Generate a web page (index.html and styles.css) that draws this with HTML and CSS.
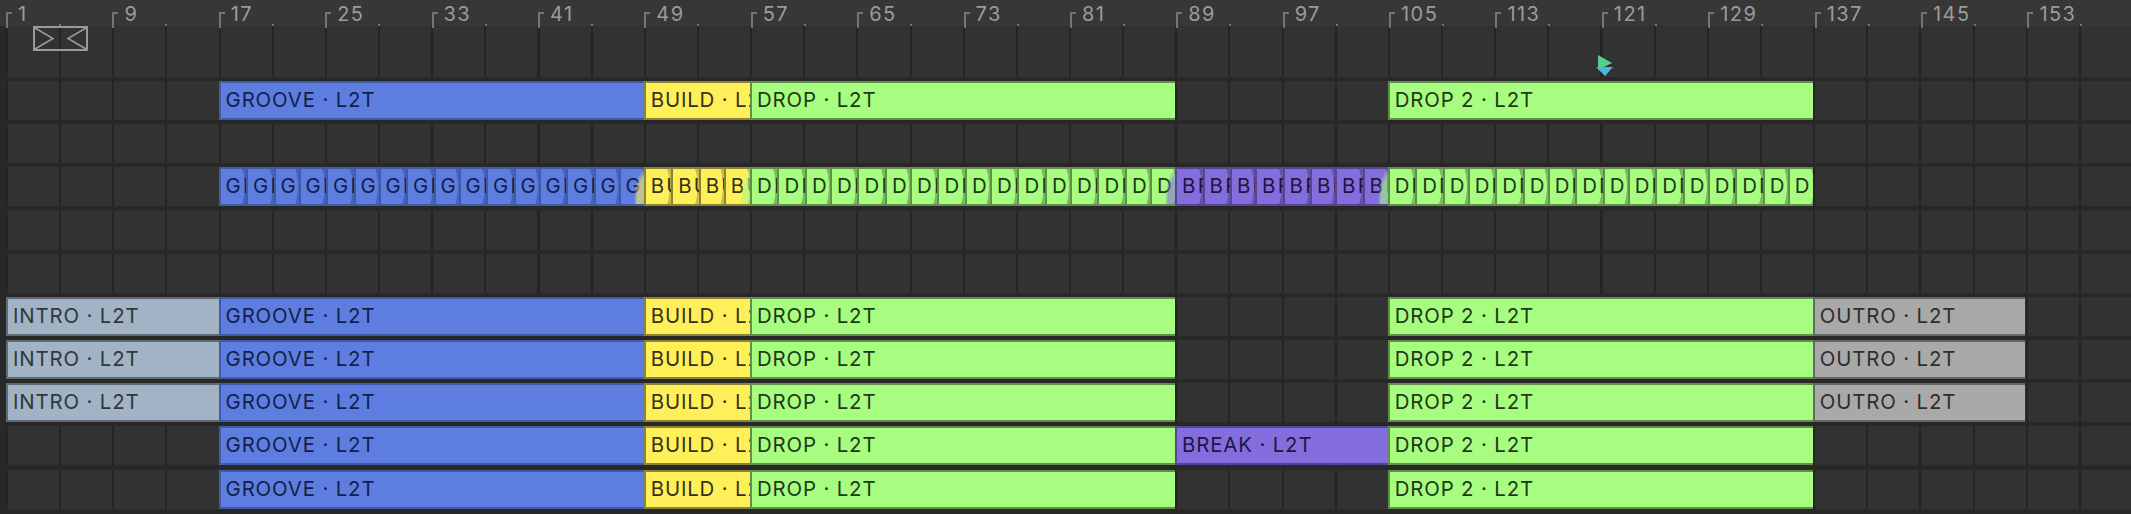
FILE: index.html
```html
<!DOCTYPE html>
<html lang="en">
<head>
  <meta charset="UTF-8">
  <title>Arrangement</title>
  <link rel="stylesheet" href="styles.css">
</head>
<body>

  <div class="ruler">
    <span class="mark">1</span><span class="mark">9</span><span class="mark">17</span><span class="mark">25</span>
    <span class="mark">33</span><span class="mark">41</span><span class="mark">49</span><span class="mark">57</span>
    <span class="mark">65</span><span class="mark">73</span><span class="mark">81</span><span class="mark">89</span>
    <span class="mark">97</span><span class="mark">105</span><span class="mark">113</span><span class="mark">121</span>
    <span class="mark">129</span><span class="mark">137</span><span class="mark">145</span><span class="mark">153</span>
  </div>

  <div class="tracks">

    <div class="track track-top">
      <svg class="locator" width="55" height="25" viewBox="0 0 55 25">
        <rect x="1" y="1" width="53" height="23" fill="none" stroke="#9a9a9a" stroke-width="2"/>
        <path d="M2 2 L20 12.5 L2 23 M53 2 L35 12.5 L53 23" fill="none" stroke="#9a9a9a" stroke-width="1.6"/>
      </svg>
      <svg class="playhead" width="18" height="22" viewBox="0 0 18 22">
        <path d="M2 0 L16 8 L2 15 Z" fill="#54d08e"/>
        <path d="M0 12 H17 L9 21 Z" fill="#4bb8da"/>
      </svg>
    </div>

    <div class="track">
      <div class="clip groove at-17">GROOVE · L2T</div>
      <div class="clip build at-49">BUILD · L2T</div>
      <div class="clip drop at-57">DROP · L2T</div>
      <div class="clip drop at-105">DROP 2 · L2T</div>
    </div>

    <div class="track"></div>

    <div class="track">
      <div class="clip groove at-17 sliced to-build">
        <span>GROOVE</span><span>GROOVE</span><span>GROOVE</span><span>GROOVE</span>
        <span>GROOVE</span><span>GROOVE</span><span>GROOVE</span><span>GROOVE</span>
        <span>GROOVE</span><span>GROOVE</span><span>GROOVE</span><span>GROOVE</span>
        <span>GROOVE</span><span>GROOVE</span><span>GROOVE</span><span>GROOVE</span>
      </div>
      <div class="clip build at-49 sliced to-drop">
        <span>BUILD</span><span>BUILD</span><span>BUILD</span><span>BUILD</span>
      </div>
      <div class="clip drop at-57 sliced to-break">
        <span>DROP</span><span>DROP</span><span>DROP</span><span>DROP</span>
        <span>DROP</span><span>DROP</span><span>DROP</span><span>DROP</span>
        <span>DROP</span><span>DROP</span><span>DROP</span><span>DROP</span>
        <span>DROP</span><span>DROP</span><span>DROP</span><span>DROP</span>
      </div>
      <div class="clip break at-89 sliced to-drop">
        <span>BREAK</span><span>BREAK</span><span>BREAK</span><span>BREAK</span>
        <span>BREAK</span><span>BREAK</span><span>BREAK</span><span>BREAK</span>
      </div>
      <div class="clip drop at-105 sliced">
        <span>DROP</span><span>DROP</span><span>DROP</span><span>DROP</span>
        <span>DROP</span><span>DROP</span><span>DROP</span><span>DROP</span>
        <span>DROP</span><span>DROP</span><span>DROP</span><span>DROP</span>
        <span>DROP</span><span>DROP</span><span>DROP</span><span>DROP</span>
      </div>
    </div>

    <div class="track"></div>
    <div class="track"></div>

    <div class="track">
      <div class="clip intro at-1">INTRO · L2T</div>
      <div class="clip groove at-17">GROOVE · L2T</div>
      <div class="clip build at-49">BUILD · L2T</div>
      <div class="clip drop at-57">DROP · L2T</div>
      <div class="clip drop at-105">DROP 2 · L2T</div>
      <div class="clip outro at-137">OUTRO · L2T</div>
    </div>

    <div class="track">
      <div class="clip intro at-1">INTRO · L2T</div>
      <div class="clip groove at-17">GROOVE · L2T</div>
      <div class="clip build at-49">BUILD · L2T</div>
      <div class="clip drop at-57">DROP · L2T</div>
      <div class="clip drop at-105">DROP 2 · L2T</div>
      <div class="clip outro at-137">OUTRO · L2T</div>
    </div>

    <div class="track">
      <div class="clip intro at-1">INTRO · L2T</div>
      <div class="clip groove at-17">GROOVE · L2T</div>
      <div class="clip build at-49">BUILD · L2T</div>
      <div class="clip drop at-57">DROP · L2T</div>
      <div class="clip drop at-105">DROP 2 · L2T</div>
      <div class="clip outro at-137">OUTRO · L2T</div>
    </div>

    <div class="track">
      <div class="clip groove at-17">GROOVE · L2T</div>
      <div class="clip build at-49">BUILD · L2T</div>
      <div class="clip drop at-57">DROP · L2T</div>
      <div class="clip break at-89">BREAK · L2T</div>
      <div class="clip drop at-105">DROP 2 · L2T</div>
    </div>

    <div class="track">
      <div class="clip groove at-17">GROOVE · L2T</div>
      <div class="clip build at-49">BUILD · L2T</div>
      <div class="clip drop at-57">DROP · L2T</div>
      <div class="clip drop at-105">DROP 2 · L2T</div>
    </div>

  </div>

</body>
</html>
```

FILE: styles.css
```css
* { box-sizing: border-box; }
html, body {
  margin: 0; padding: 0; height: 100%; width: 100%;
  overflow: hidden;
  font-family: Inter, 'Liberation Sans', sans-serif;
  background-color: #282828;
}

/* ruler */
.ruler {
  display: flex; height: 26px; padding-left: 6px;
  background-color: #373737;
}
.mark {
  position: relative; flex: none; width: 106.4px;
  padding-left: 12px; line-height: 28px;
  font-size: 20px; letter-spacing: 1.4px; color: #9b9b9b;
  white-space: nowrap;
}
.mark::before {
  content: ""; position: absolute; left: 0; top: 12px;
  width: 4px; height: 14px;
  border-left: 2px solid #757575; border-top: 2px solid #757575;
}
.mark::after {
  content: ""; position: absolute; left: 53px; top: 24px;
  width: 2px; height: 2px; background-color: #757575;
}

/* tracks */
.tracks {
  display: flex; flex-direction: column; gap: 4.2px;
  padding-left: 6px;
}
.track {
  display: grid; grid-template-columns: repeat(40, 53.15px); grid-template-rows: 1fr;
  height: 39px;
  background-color: #323232;
  background-image: repeating-linear-gradient(90deg, #242424 0, #242424 2px, transparent 2px, transparent 53.15px);
}
.track-top { height: 50.8px; }

.locator { grid-area: 1 / 1; margin-left: 27px; }
.playhead { grid-area: 1 / 31; align-self: end; margin-left: -4px; }

/* clips */
.clip {
  grid-row: 1; min-width: 0; overflow: hidden; position: relative;
  padding-left: 5px; line-height: 34px;
  font-size: 20.4px; letter-spacing: 0.85px; white-space: nowrap;
  background-color: var(--fill); color: var(--ink);
  border: 2px solid var(--edge); border-right: 0;
}
.at-1 { grid-column: 1 / span 4; }
.at-17 { grid-column: 5 / span 8; }
.at-49 { grid-column: 13 / span 2; }
.at-57 { grid-column: 15 / span 8; }
.at-89 { grid-column: 23 / span 4; }
.at-105 { grid-column: 27 / span 8; }
.at-137 { grid-column: 35 / span 4; }

.groove { --fill: #5d7ee0; --edge: #3f5aa8; --ink: #14204a; --shade: #4763b8; }
.build { --fill: #fff05a; --edge: #8c8435; --ink: #35321a; --shade: #c9be49; }
.drop { --fill: #a6fd7f; --edge: #5f8f49; --ink: #223718; --shade: #79bd5c; }
.break { --fill: #846edd; --edge: #534696; --ink: #1f1742; --shade: #6452ad; }
.intro { --fill: #a1b3c4; --edge: #5f6a74; --ink: #30373d; }
.outro { --fill: #a9a9a9; --edge: #666666; --ink: #2e2e2e; }

/* cut up clips */
.sliced { display: flex; padding-left: 0; border-left: 0; letter-spacing: 2.2px; }
.sliced span {
  flex: none; width: 27.5px; padding-left: 5px; overflow: hidden;
  border-left: 2px solid var(--edge);
  background: radial-gradient(ellipse 54% 85% at 42% 50%, var(--fill) 96%, var(--shade) 100%);
}
.sliced span:nth-child(3n) { width: 25px; }
.sliced::after {
  content: ""; position: absolute; right: 0; bottom: 0;
  width: 10px; height: 100%;
  background: radial-gradient(ellipse 100% 100% at 100% 100%, var(--next) 70%, transparent 100%);
  opacity: 0.6;
}
.to-build { --next: #fff05a; }
.to-drop { --next: #a6fd7f; }
.to-break { --next: #846edd; }
```
